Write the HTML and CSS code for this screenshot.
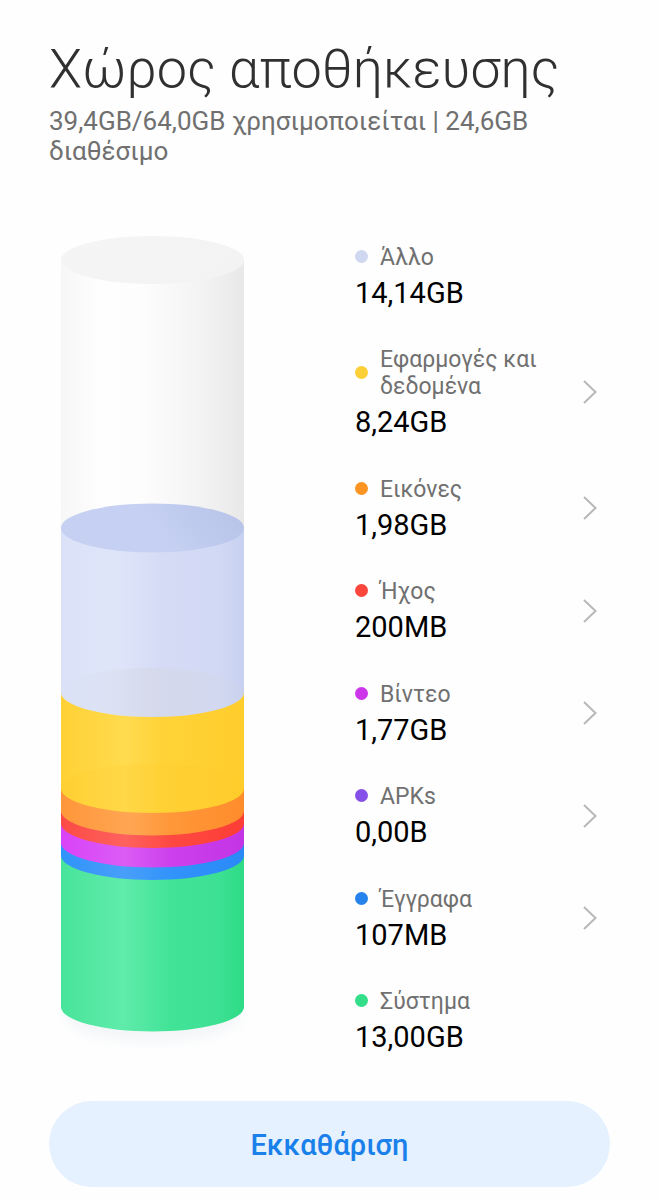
FILE: index.html
```html
<!DOCTYPE html>
<html lang="el">
<head>
<meta charset="utf-8">
<meta name="viewport" content="width=device-width, initial-scale=1">
<title>Χώρος αποθήκευσης</title>
<link rel="stylesheet" href="styles.css">
</head>
<body>
<main class="page">
  <header class="header">
    <h1 class="title">Χώρος αποθήκευσης</h1>
    <p class="summary">39,4GB/64,0GB χρησιμοποιείται | 24,6GB διαθέσιμο</p>
  </header>
  <section class="storage">
    <svg class="cylinder" viewBox="0 0 207 824" aria-hidden="true">
      <defs>
        <linearGradient id="glass"><stop offset="0" stop-color="#f7f7f7"/><stop offset=".22" stop-color="#fefefe"/><stop offset=".45" stop-color="#fdfdfd"/><stop offset=".75" stop-color="#f4f4f4"/><stop offset="1" stop-color="#e8e8e8"/></linearGradient>
        <linearGradient id="lid" x2="1" y2=".3"><stop offset="0" stop-color="#f5f5f5"/><stop offset="1" stop-color="#f3f3f3"/></linearGradient>
        <linearGradient id="surface" x2="1" y2="-.2"><stop offset="0" stop-color="#c5d0f2"/><stop offset=".4" stop-color="#c5d0f2"/><stop offset="1" stop-color="#b4c1e6"/></linearGradient>
        <linearGradient id="other"><stop offset="0" stop-color="#dbe2f8"/><stop offset=".3" stop-color="#dfe5f9"/><stop offset=".55" stop-color="#d5dbf5"/><stop offset=".85" stop-color="#d2d9f4"/><stop offset="1" stop-color="#c7d1f0"/></linearGradient>
        <linearGradient id="apps"><stop offset="0" stop-color="#ffd135"/><stop offset=".35" stop-color="#ffdb4e"/><stop offset=".55" stop-color="#ffd338"/><stop offset="1" stop-color="#ffcd2c"/></linearGradient>
        <linearGradient id="images"><stop offset="0" stop-color="#ff963a"/><stop offset=".38" stop-color="#ffa653"/><stop offset=".6" stop-color="#ff9739"/><stop offset="1" stop-color="#ff8c2b"/></linearGradient>
        <linearGradient id="audio"><stop offset="0" stop-color="#fb4a45"/><stop offset=".35" stop-color="#ff625e"/><stop offset=".6" stop-color="#ff4842"/><stop offset="1" stop-color="#fb3e36"/></linearGradient>
        <linearGradient id="video"><stop offset="0" stop-color="#d943f8"/><stop offset=".35" stop-color="#db5cf5"/><stop offset=".6" stop-color="#cb40ec"/><stop offset="1" stop-color="#c334e5"/></linearGradient>
        <linearGradient id="docs"><stop offset="0" stop-color="#3093fa"/><stop offset=".35" stop-color="#489ff9"/><stop offset=".6" stop-color="#3293fb"/><stop offset="1" stop-color="#2a89f7"/></linearGradient>
        <linearGradient id="system"><stop offset="0" stop-color="#48e49b"/><stop offset=".34" stop-color="#60ebab"/><stop offset=".6" stop-color="#41e397"/><stop offset=".85" stop-color="#3ee193"/><stop offset="1" stop-color="#2edb86"/></linearGradient>
        <linearGradient id="depth"><stop offset="0" stop-color="#d2d5dc" stop-opacity="0"/><stop offset=".5" stop-color="#d2d5dc" stop-opacity=".4"/><stop offset="1" stop-color="#d2d5dc" stop-opacity=".1"/></linearGradient>
        <filter id="blur" x="-20%" y="-50%" width="140%" height="200%"><feGaussianBlur stdDeviation="6"/></filter>
      </defs>
      <ellipse cx="103.500" cy="780" rx="88" ry="26" fill="#e8edf2" opacity=".5" filter="url(#blur)"/>
      <path fill="url(#glass)" d="M12 24V771a91.500 24.500 0 0 0 183 0V24z"/>
      <path fill="url(#system)" d="M12 292V771a91.500 24.500 0 0 0 183 0V292z"/>
      <path fill="url(#docs)" d="M12 292V619.500a91.500 24.500 0 0 0 183 0V292z"/>
      <path fill="url(#video)" d="M12 292V607a91.500 24.500 0 0 0 183 0V292z"/>
      <path fill="url(#audio)" d="M12 292V587.500a91.500 24.500 0 0 0 183 0V292z"/>
      <path fill="url(#images)" d="M12 292V575a91.500 24.500 0 0 0 183 0V292z"/>
      <path fill="url(#apps)" d="M12 292V552.500a91.500 24.500 0 0 0 183 0V292z"/>
      <ellipse cx="103.500" cy="552.500" rx="91.500" ry="24.500" fill="#ffc825" opacity=".14"/>
      <path fill="url(#other)" d="M12 292V456.500a91.500 24.500 0 0 0 183 0V292z"/>
      <ellipse cx="103.500" cy="456.500" rx="91.500" ry="24.500" fill="url(#depth)"/>
      <ellipse cx="103.500" cy="292" rx="91.500" ry="24.500" fill="url(#surface)"/>
      <ellipse cx="103.500" cy="24" rx="91.500" ry="24" fill="url(#lid)"/>
    </svg>
    <ul class="legend">
      <li class="item"><span class="label other">Άλλο</span><span class="value">14,14GB</span></li>
      <li><button class="item link" type="button"><span class="label apps">Εφαρμογές και δεδομένα</span><span class="value">8,24GB</span><svg class="chevron" viewBox="0 0 14 24" aria-hidden="true"><path d="M1 1 12.500 12 1 23"/></svg></button></li>
      <li><button class="item link" type="button"><span class="label images">Εικόνες</span><span class="value">1,98GB</span><svg class="chevron" viewBox="0 0 14 24" aria-hidden="true"><path d="M1 1 12.500 12 1 23"/></svg></button></li>
      <li><button class="item link" type="button"><span class="label audio">Ήχος</span><span class="value">200MB</span><svg class="chevron" viewBox="0 0 14 24" aria-hidden="true"><path d="M1 1 12.500 12 1 23"/></svg></button></li>
      <li><button class="item link" type="button"><span class="label video">Βίντεο</span><span class="value">1,77GB</span><svg class="chevron" viewBox="0 0 14 24" aria-hidden="true"><path d="M1 1 12.500 12 1 23"/></svg></button></li>
      <li><button class="item link" type="button"><span class="label apks">APKs</span><span class="value">0,00B</span><svg class="chevron" viewBox="0 0 14 24" aria-hidden="true"><path d="M1 1 12.500 12 1 23"/></svg></button></li>
      <li><button class="item link" type="button"><span class="label docs">Έγγραφα</span><span class="value">107MB</span><svg class="chevron" viewBox="0 0 14 24" aria-hidden="true"><path d="M1 1 12.500 12 1 23"/></svg></button></li>
      <li class="item"><span class="label system">Σύστημα</span><span class="value">13,00GB</span></li>
    </ul>
  </section>
  <button class="clean" type="button">Εκκαθάριση</button>
</main>
</body>
</html>
```
FILE: styles.css
```css
* { box-sizing: border-box; }
body {
  margin: 0;
  background: #fefefe;
  color: #000;
  font-family: Roboto, "Noto Sans", sans-serif;
}
button {
  border: 0;
  background: none;
  color: inherit;
  font: inherit;
  cursor: pointer;
}
.page { padding: 37px 49px 14px; }
.title {
  margin: 0;
  color: #303030;
  font-size: 54px;
  font-weight: 300;
  line-height: 64px;
}
.summary {
  margin: 5px 0 0;
  color: #707070;
  font-size: 26px;
  line-height: 30px;
}
.storage {
  display: grid;
  grid-template-columns: 6fr 5fr;
  margin-top: 70px;
}
.cylinder {
  display: block;
  width: 207px;
  max-width: 90%;
}
.legend {
  display: flex;
  flex-direction: column;
  justify-content: space-between;
  margin: 0;
  padding: 8px 13px 7px 0;
  list-style: none;
}
.item {
  display: grid;
  grid-template-columns: 1fr 14px;
  column-gap: 40px;
  width: 100%;
  padding: 0;
  text-align: left;
}
.label {
  display: flex;
  align-items: center;
  gap: 12px;
  color: #707070;
  font-size: 23px;
  line-height: 27px;
}
.label::before {
  content: "";
  flex: none;
  width: 13px;
  height: 13px;
  margin-bottom: 2px;
  border-radius: 50%;
  background: currentColor;
}
.value {
  grid-column: 1;
  padding-top: 7px;
  font-size: 29px;
  line-height: 31px;
}
.chevron {
  grid-column: 2;
  grid-row: 1 / span 2;
  align-self: center;
  width: 14px;
  height: 24px;
  fill: none;
  stroke: #b8b8b8;
  stroke-width: 2;
}
.other::before { background: #cfd8f0; }
.apps::before { background: #fbcf35; }
.images::before { background: #fb9422; }
.audio::before { background: #fb463c; }
.video::before { background: #cc37ea; }
.apks::before { background: #8550e8; }
.docs::before { background: #2683ec; }
.system::before { background: #32de8a; }
.clean {
  display: block;
  width: 100%;
  margin-top: 41px;
  padding: 26px 24px 24px;
  border-radius: 43px;
  background: #e5f1ff;
  color: #1a80ea;
  font-size: 29px;
  font-weight: 500;
  line-height: 36px;
}
```
